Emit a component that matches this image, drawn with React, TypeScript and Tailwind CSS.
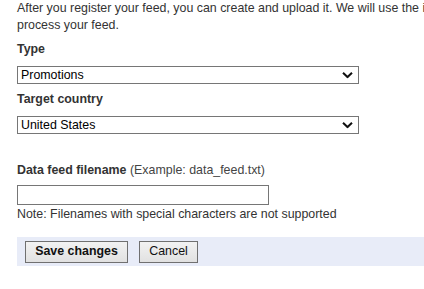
function Chevron() {
  return (
    <svg
      className="pointer-events-none absolute right-[6px] top-1/2 -translate-y-1/2"
      width="11"
      height="7"
      viewBox="0 0 11 7"
      fill="none"
    >
      <path d="M1 1.2l4.5 4.3L10 1.2" stroke="#111" strokeWidth="2" />
    </svg>
  );
}

function SelectBox({ value, options }: { value: string; options: string[] }) {
  return (
    <div className="relative mt-[8px] w-[342px]">
      <select
        defaultValue={value}
        className="block h-[18px] w-full appearance-none border border-[#767676] bg-white pl-[3px] text-black"
      >
        {options.map((o) => (
          <option key={o} value={o}>
            {o}
          </option>
        ))}
      </select>
      <Chevron />
    </div>
  );
}

export default function App() {
  return (
    <div className="h-[289px] w-[424px] overflow-hidden bg-white font-['Liberation_Sans',Arial,sans-serif] text-[12.4px] leading-[17px] text-[#333]">
      <div className="w-[700px] pl-[17px]">
        <p>
          After you register your feed, you can create and upload it. We will use the information
          you provide to
          <br />
          process your feed.
        </p>

        <label className="mt-[7px] block font-bold">Type</label>
        <SelectBox value="Promotions" options={["Promotions", "Products"]} />

        <label className="mt-[7px] block font-bold">Target country</label>
        <SelectBox value="United States" options={["United States", "United Kingdom"]} />

        <label className="mt-[28px] block">
          <span className="font-bold">Data feed filename</span>{" "}
          <span className="text-[#444]">(Example: data_feed.txt)</span>
        </label>
        <input
          type="text"
          className="mt-[6px] block h-[20px] w-[252px] border border-[#767676] bg-white"
        />
        <p className="mt-px">Note: Filenames with special characters are not supported</p>

        <div className="mt-[14px] flex h-[29px] items-center gap-[11px] bg-[#e8ecf8] pl-[8px]">
          <button className="h-[22px] w-[103px] border border-[#707070] bg-gradient-to-b from-[#f2f2f2] to-[#e1e1e1] font-bold text-[#111]">
            Save changes
          </button>
          <button className="h-[22px] w-[59px] border border-[#707070] bg-gradient-to-b from-[#f2f2f2] to-[#e1e1e1] text-[#111]">
            Cancel
          </button>
        </div>
      </div>
    </div>
  );
}
